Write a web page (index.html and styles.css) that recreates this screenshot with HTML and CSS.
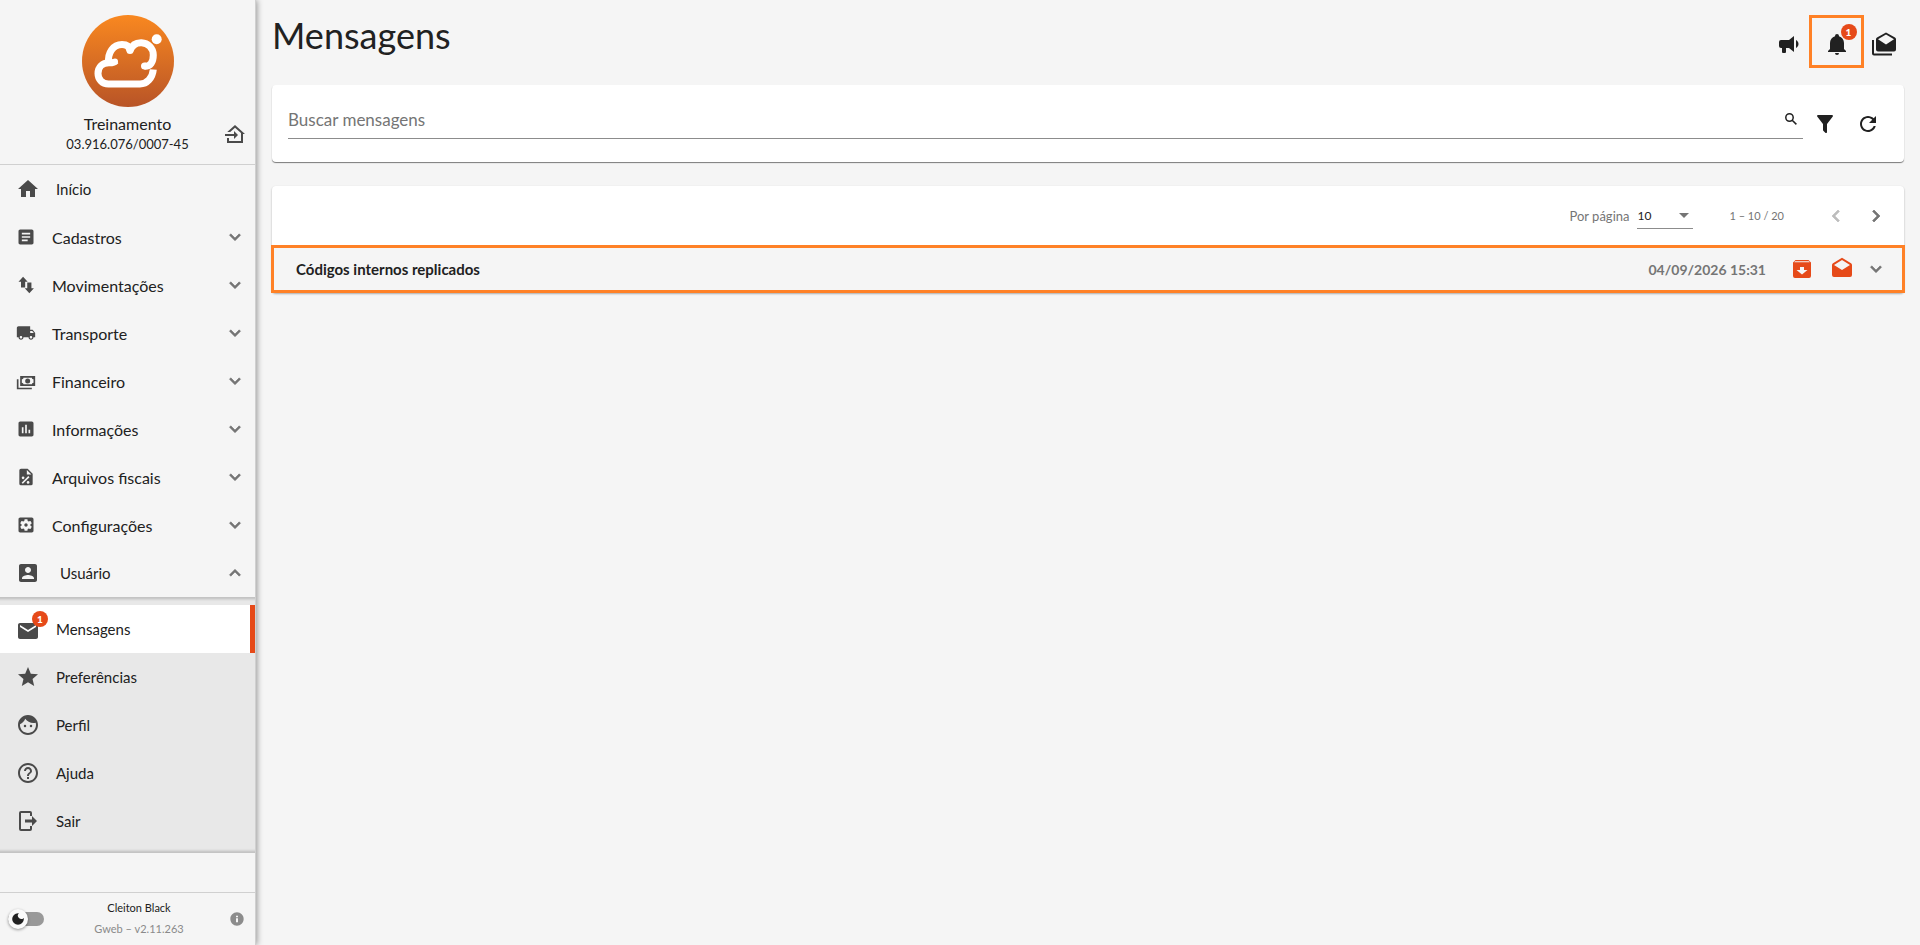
FILE: index.html
```html
<!DOCTYPE html>
<html lang="pt-BR">
<head>
    <meta charset="UTF-8">
    <meta name="viewport" content="width=device-width, initial-scale=1.0">
    <title>Mensagens</title>
    <link rel="stylesheet" href="styles.css">
</head>
<body>

    <!-- Ícones reutilizados -->
    <svg class="sprite" aria-hidden="true">
        <symbol id="chevron" viewBox="0 0 24 24"><path d="M16.59 8.59L12 13.17 7.41 8.59 6 10l6 6 6-6z"/></symbol>
    </svg>

    <div class="layout">
        <aside class="sidebar">
            <header class="company">
                <svg class="logo" viewBox="0 0 92 92" aria-hidden="true">
                    <defs>
                        <linearGradient id="logo-bg" x1="0" y1="0" x2="0" y2="1">
                            <stop offset="0" stop-color="#f98820"/>
                            <stop offset="1" stop-color="#b85427"/>
                        </linearGradient>
                    </defs>
                    <circle cx="46" cy="46" r="46" fill="url(#logo-bg)"/>
                    <path class="logo-line" d="M71.3 54.5C70.5 63 65 69 58 69H26.500C20 69 16 64 16 58.500C16 52 20.500 47.800 27 47.800C30 47.800 32.500 47.500 33.500 46"/>
                    <path class="logo-line" d="M26.700 47.500C25.500 38 31 29.500 40 29.500C45 29.500 47.500 32 48 35.700C50 30 54 27.500 59.500 27.700C66 28 71.300 33 71.300 40C71.300 47 68.500 51.500 62.500 51.300" />
                    <circle cx="48" cy="35.500" r="3.500" fill="#fff"/>
                    <circle cx="33" cy="46.500" r="3" fill="#fff"/>
                    <circle cx="62.500" cy="51" r="3.500" fill="#fff"/>
                    <circle cx="74.700" cy="24.300" r="5" fill="#fff"/>
                </svg>
                <div class="company-name">Treinamento</div>
                <div class="company-id">03.916.076/0007-45</div>
                <button class="icon-button switch-company" type="button" aria-label="Trocar empresa">
                    <svg class="icon" viewBox="0 0 24 24"><path d="M15 13L11 9V12H2V14H11V17M22 12H20V21H4V16H6V19H18V11L12 5.690L7.210 10H4.220L12 3Z"/></svg>
                </button>
            </header>

            <nav class="menu">
                <a class="menu-item wide" href="#">
                    <svg class="icon" viewBox="0 0 24 24"><path d="M10 20v-6h4v6h5v-8h3L12 3 2 12h3v8z"/></svg>
                    <span>Início</span>
                </a>
                <button class="menu-item" type="button">
                    <svg class="icon small" viewBox="0 0 24 24"><path d="M19 3H5c-1.100 0-2 .9-2 2v14c0 1.100.9 2 2 2h14c1.100 0 2-.9 2-2V5c0-1.100-.9-2-2-2zm-5 14H7v-2h7v2zm3-4H7v-2h10v2zm0-4H7V7h10v2z"/></svg>
                    <span>Cadastros</span>
                    <svg class="chevron"><use href="#chevron"/></svg>
                </button>
                <button class="menu-item" type="button">
                    <svg class="icon small" viewBox="0 0 24 24"><path d="M8.500 2L14 8h-3v7H6V8H3zM16 22l5.500-6H18.500V9h-5v7h-3z"/></svg>
                    <span>Movimentações</span>
                    <svg class="chevron"><use href="#chevron"/></svg>
                </button>
                <button class="menu-item" type="button">
                    <svg class="icon small" viewBox="0 0 24 24"><path d="M20 8h-3V4H3c-1.100 0-2 .9-2 2v11h2c0 1.660 1.340 3 3 3s3-1.340 3-3h6c0 1.660 1.340 3 3 3s3-1.340 3-3h2v-5l-3-4zM6 18.500c-.83 0-1.500-.67-1.500-1.500s.67-1.500 1.500-1.500 1.500.67 1.500 1.500-.67 1.500-1.500 1.500zm13.500-9l1.960 2.500H17V9.500h2.500zm-1.500 9c-.83 0-1.500-.67-1.500-1.500s.67-1.500 1.500-1.500 1.500.67 1.500 1.500-.67 1.500-1.500 1.500z"/></svg>
                    <span>Transporte</span>
                    <svg class="chevron"><use href="#chevron"/></svg>
                </button>
                <button class="menu-item" type="button">
                    <svg class="icon small" viewBox="0 0 24 24"><path fill-rule="evenodd" d="M5,6H23V18H5V6M14,9A3,3 0 0,1 17,12A3,3 0 0,1 14,15A3,3 0 0,1 11,12A3,3 0 0,1 14,9M9,8A2,2 0 0,1 7,10V14A2,2 0 0,1 9,16H19A2,2 0 0,1 21,14V10A2,2 0 0,1 19,8H9M1,10H3V20H19V22H1V10Z"/></svg>
                    <span>Financeiro</span>
                    <svg class="chevron"><use href="#chevron"/></svg>
                </button>
                <button class="menu-item" type="button">
                    <svg class="icon small" viewBox="0 0 24 24"><path d="M19 3H5c-1.100 0-2 .9-2 2v14c0 1.100.9 2 2 2h14c1.100 0 2-.9 2-2V5c0-1.100-.9-2-2-2zM9 17H7v-7h2v7zm4 0h-2V7h2v10zm4 0h-2v-4h2v4z"/></svg>
                    <span>Informações</span>
                    <svg class="chevron"><use href="#chevron"/></svg>
                </button>
                <button class="menu-item" type="button">
                    <svg class="icon small" viewBox="0 0 24 24">
                        <path fill-rule="evenodd" d="M14 2l6 6v12a2 2 0 0 1-2 2H6a2 2 0 0 1-2-2V4a2 2 0 0 1 2-2h8zM13 3.500V9h5.500z"/>
                        <path d="M7.500 19.500l8-8" stroke="#f5f5f5" stroke-width="2"/>
                        <circle cx="8.500" cy="13" r="1.600" fill="#f5f5f5"/>
                        <circle cx="14.500" cy="18.500" r="1.600" fill="#f5f5f5"/>
                    </svg>
                    <span>Arquivos fiscais</span>
                    <svg class="chevron"><use href="#chevron"/></svg>
                </button>
                <button class="menu-item" type="button">
                    <svg class="icon small" viewBox="0 0 24 24"><path d="M12 10c-1.100 0-2 .9-2 2s.9 2 2 2 2-.9 2-2-.9-2-2-2zm7-7H5c-1.110 0-2 .9-2 2v14c0 1.100.89 2 2 2h14c1.110 0 2-.9 2-2V5c0-1.100-.89-2-2-2zm-1.750 9c0 .23-.02.46-.05.68l1.480 1.160c.13.11.17.3.08.45l-1.400 2.420c-.09.15-.27.21-.43.15l-1.740-.7c-.36.28-.76.51-1.180.69l-.26 1.850c-.03.17-.18.3-.35.3h-2.800c-.17 0-.32-.13-.35-.29l-.26-1.850c-.43-.18-.82-.41-1.180-.69l-1.740.7c-.16.06-.34 0-.43-.15l-1.400-2.420c-.09-.15-.05-.34.08-.45l1.480-1.160c-.03-.23-.05-.46-.05-.69 0-.23.02-.46.05-.68l-1.480-1.160c-.13-.11-.17-.3-.08-.45l1.400-2.420c.09-.15.27-.21.43-.15l1.740.7c.36-.28.76-.51 1.180-.69l.26-1.850c.03-.17.18-.3.35-.3h2.800c.17 0 .32.13.35.29l.26 1.850c.43.18.82.41 1.180.69l1.740-.7c.16-.06.34 0 .43.15l1.400 2.420c.09.15.05.34-.08.45l-1.480 1.160c.03.23.05.46.05.69z"/></svg>
                    <span>Configurações</span>
                    <svg class="chevron"><use href="#chevron"/></svg>
                </button>
                <button class="menu-item user" type="button" aria-expanded="true">
                    <svg class="icon" viewBox="0 0 24 24"><path d="M3 5v14c0 1.100.89 2 2 2h14c1.100 0 2-.9 2-2V5c0-1.100-.9-2-2-2H5c-1.110 0-2 .9-2 2zm12 4c0 1.660-1.340 3-3 3s-3-1.340-3-3 1.340-3 3-3 3 1.340 3 3zm-9 8c0-2 4-3.100 6-3.100s6 1.100 6 3.100v1H6v-1z"/></svg>
                    <span>Usuário</span>
                    <svg class="chevron up"><use href="#chevron"/></svg>
                </button>

                <div class="submenu">
                    <a class="menu-item wide active" href="#" aria-current="page">
                        <span class="with-badge">
                            <svg class="icon" viewBox="0 0 24 24"><path d="M20 4H4c-1.100 0-1.990.9-1.990 2L2 18c0 1.100.9 2 2 2h16c1.100 0 2-.9 2-2V6c0-1.100-.9-2-2-2zm0 4l-8 5-8-5V6l8 5 8-5v2z"/></svg>
                            <span class="badge">1</span>
                        </span>
                        <span>Mensagens</span>
                    </a>
                    <a class="menu-item wide" href="#">
                        <svg class="icon" viewBox="0 0 24 24"><path d="M12 17.270L18.180 21l-1.640-7.030L22 9.240l-7.190-.61L12 2 9.190 8.630 2 9.240l5.460 4.730L5.820 21z"/></svg>
                        <span>Preferências</span>
                    </a>
                    <a class="menu-item wide" href="#">
                        <svg class="icon" viewBox="0 0 24 24"><circle cx="9" cy="13" r="1.250"/><circle cx="15" cy="13" r="1.250"/><path d="M12 2C6.480 2 2 6.480 2 12s4.480 10 10 10 10-4.480 10-10S17.520 2 12 2zm0 18c-4.410 0-8-3.590-8-8 0-.29.02-.58.05-.86 2.360-1.050 4.230-2.980 5.210-5.370C11.070 8.330 14.050 10 17.420 10c.78 0 1.530-.09 2.250-.26.21.71.33 1.470.33 2.260 0 4.410-3.590 8-8 8z"/></svg>
                        <span>Perfil</span>
                    </a>
                    <a class="menu-item wide" href="#">
                        <svg class="icon" viewBox="0 0 24 24"><path d="M11 18h2v-2h-2v2zm1-16C6.480 2 2 6.480 2 12s4.480 10 10 10 10-4.480 10-10S17.520 2 12 2zm0 18c-4.410 0-8-3.590-8-8s3.590-8 8-8 8 3.590 8 8-3.590 8-8 8zm0-14c-2.210 0-4 1.790-4 4h2c0-1.100.9-2 2-2s2 .9 2 2c0 2-3 1.750-3 5h2c0-2.250 3-2.500 3-5 0-2.210-1.790-4-4-4z"/></svg>
                        <span>Ajuda</span>
                    </a>
                    <a class="menu-item wide" href="#">
                        <svg class="icon" viewBox="0 0 24 24"><path d="M5 2h9a2 2 0 0 1 2 2v3h-2V4H5v16h9v-3h2v3a2 2 0 0 1-2 2H5a2 2 0 0 1-2-2V4a2 2 0 0 1 2-2z"/><path d="M9 10.500h7V7l5 5-5 5v-3.500H9z"/></svg>
                        <span>Sair</span>
                    </a>
                </div>
            </nav>

            <footer class="sidebar-footer">
                <label class="theme-toggle">
                    <input type="checkbox" aria-label="Tema escuro">
                    <span class="track"></span>
                    <span class="thumb">
                        <svg viewBox="0 0 24 24"><path d="M12 2a10 10 0 1 0 10 10c0-.7-.1-1.300-.2-1.900A5.600 5.600 0 1 1 13.500 2.100 10 10 0 0 0 12 2z"/></svg>
                    </span>
                </label>
                <div class="session">
                    <div>Cleiton Black</div>
                    <div class="version">Gweb – v2.11.263</div>
                </div>
                <button class="icon-button info" type="button" aria-label="Informações da versão">
                    <svg viewBox="0 0 24 24"><path d="M12 2C6.480 2 2 6.480 2 12s4.480 10 10 10 10-4.480 10-10S17.520 2 12 2zm1.500 15h-3v-6h3v6zm0-7.500h-3v-2.500h3v2.500z"/></svg>
                </button>
            </footer>
        </aside>

        <main class="content">
            <header class="page-header">
                <h1>Mensagens</h1>
                <div class="page-actions">
                    <button class="icon-button" type="button" aria-label="Comunicados">
                        <svg class="icon" viewBox="0 0 24 24"><path d="M12,8H4A2,2 0 0,0 2,10V14A2,2 0 0,0 4,16H5V20A1,1 0 0,0 6,21H8A1,1 0 0,0 9,20V16H12L17,20V4L12,8M21.500,12C21.500,13.710 20.540,15.260 19,16V8C20.530,8.750 21.500,10.300 21.500,12Z"/></svg>
                    </button>
                    <button class="icon-button notifications" type="button" aria-label="Notificações">
                        <span class="with-badge">
                            <svg class="icon" viewBox="0 0 24 24"><path d="M21,19V20H3V19L5,17V11C5,7.900 7.030,5.170 10,4.290V4A2,2 0 0,1 14,4V4.290C16.970,5.170 19,7.900 19,11V17L21,19M14,21A2,2 0 0,1 10,21"/></svg>
                            <span class="badge">1</span>
                        </span>
                    </button>
                    <button class="icon-button" type="button" aria-label="Marcar todas como lidas">
                        <svg class="icon" viewBox="0 0 24 24"><path fill-rule="evenodd" d="M14 .5L23 5.500C23.700 6 24 6.500 24 7.300V17.500a2 2 0 0 1-2 2H6a2 2 0 0 1-2-2V7.300C4 6.500 4.300 6 5 5.500zM14 2.600L6 7.300l8 5.200 8-5.200z"/><path d="M0 8h2v13.500h18v2H2a2 2 0 0 1-2-2z"/></svg>
                    </button>
                </div>
            </header>

            <form class="card search">
                <div class="search-field">
                    <input type="search" placeholder="Buscar mensagens" aria-label="Buscar mensagens">
                    <button class="icon-button" type="submit" aria-label="Buscar">
                        <svg class="search-icon" viewBox="0 0 12 12"><circle cx="4.500" cy="4.500" r="3.700"/><path d="M7.200 7.200L11.400 11.400"/></svg>
                    </button>
                </div>
                <button class="icon-button" type="button" aria-label="Filtrar">
                    <svg class="icon" viewBox="0 0 24 24"><path d="M14,12V19.880C14.040,20.180 13.940,20.500 13.710,20.710C13.320,21.100 12.690,21.100 12.300,20.710L10.290,18.700C10.060,18.470 9.960,18.160 10,17.870V12H9.970L4.210,4.620C3.870,4.190 3.950,3.560 4.380,3.220C4.570,3.080 4.780,3 5,3H19C19.220,3 19.430,3.080 19.620,3.220C20.050,3.560 20.130,4.190 19.790,4.620L14.030,12H14Z"/></svg>
                </button>
                <button class="icon-button reload" type="reset" aria-label="Atualizar">
                    <svg class="icon" viewBox="0 0 24 24"><path d="M17.650 6.350C16.200 4.900 14.210 4 12 4c-4.420 0-7.990 3.580-7.990 8s3.570 8 7.990 8c3.730 0 6.840-2.550 7.730-6h-2.080c-.82 2.330-3.040 4-5.650 4-3.310 0-6-2.690-6-6s2.690-6 6-6c1.660 0 3.140.69 4.220 1.780L13 11h7V4l-2.350 2.350z"/></svg>
                </button>
            </form>

            <section class="card messages">
                <div class="paginator">
                    <label for="page-size">Por página</label>
                    <div class="page-size">
                        <select id="page-size">
                            <option>10</option>
                            <option>20</option>
                            <option>50</option>
                        </select>
                        <svg class="caret" viewBox="0 0 10 5"><path d="M0 0h10L5 5z"/></svg>
                    </div>
                    <span class="range">1 – 10 / 20</span>
                    <button class="icon-button" type="button" aria-label="Página anterior" disabled>
                        <svg class="page-arrow prev"><use href="#chevron"/></svg>
                    </button>
                    <button class="icon-button" type="button" aria-label="Próxima página">
                        <svg class="page-arrow next"><use href="#chevron"/></svg>
                    </button>
                </div>

                <article class="message">
                    <h2>Códigos internos replicados</h2>
                    <time datetime="2026-09-04T15:31">04/09/2026 15:31</time>
                    <div class="message-actions">
                        <button class="icon-button" type="button" aria-label="Arquivar">
                            <svg class="icon" viewBox="0 0 24 24"><path fill-rule="evenodd" d="M5.500 3h13L21 5.500V19a2 2 0 0 1-2 2H5a2 2 0 0 1-2-2V5.500zM5 4.200L4.300 5.200h15.400L19 4.200zM12 17.500L17.500 13H14v-3h-4v3H6.500z"/></svg>
                        </button>
                        <button class="icon-button" type="button" aria-label="Marcar como lida">
                            <svg class="icon" viewBox="0 0 24 24"><path fill-rule="evenodd" d="M4,8L12,13L20,8L12,3L4,8M22,8V18A2,2 0 0,1 20,20H4A2,2 0 0,1 2,18V8C2,7.270 2.390,6.640 2.970,6.290L12,0.640L21.030,6.290C21.610,6.640 22,7.270 22,8Z"/></svg>
                        </button>
                    </div>
                    <button class="icon-button expand" type="button" aria-label="Expandir">
                        <svg class="chevron"><use href="#chevron"/></svg>
                    </button>
                </article>
            </section>
        </main>
    </div>

</body>
</html>
```

FILE: styles.css
```css
:root {
    --color-bg: #f5f5f5;
    --color-submenu: #e8e8e8;
    --color-text: #212121;
    --color-muted: #757575;
    --color-icon: #4a4a4a;
    --color-line: #d0d0d0;
    --color-accent: #e64a19;
    --color-highlight: #ff8126;
    --font-family: Lato, "Open Sans", sans-serif;
}

* {
    box-sizing: border-box;
}

body {
    margin: 0;
    font-family: var(--font-family);
    font-size: 16px;
    color: var(--color-text);
    background-color: var(--color-bg);
}

button,
input,
select {
    font: inherit;
    color: inherit;
}

svg {
    display: block;
    flex-shrink: 0;
    fill: currentColor;
}

.sprite {
    display: none;
}

.layout {
    display: flex;
    min-height: 100vh;
}

.icon {
    width: 24px;
    height: 24px;
}

.icon.small {
    width: 20px;
    height: 20px;
}

.chevron,
.page-arrow {
    stroke: currentColor;
    stroke-width: 0.7;
}

.chevron {
    width: 22px;
    height: 22px;
}

.icon-button {
    display: flex;
    align-items: center;
    justify-content: center;
    padding: 0;
    border: 0;
    background: none;
    cursor: pointer;
}

.with-badge {
    position: relative;
    margin-top: 4px;
}

.badge {
    position: absolute;
    top: -8px;
    right: -8px;
    width: 16px;
    height: 16px;
    border-radius: 50%;
    background-color: var(--color-accent);
    color: #fff;
    font-size: 10px;
    font-weight: 900;
    line-height: 16px;
    text-align: center;
}

/* --- Menu lateral --- */
.sidebar {
    display: flex;
    flex-direction: column;
    flex-shrink: 0;
    width: 256px;
    border-right: 1px solid var(--color-line);
    box-shadow: 1px 0 6px rgba(0, 0, 0, 0.4);
}

.company {
    position: relative;
    padding: 15px 0 11px;
    border-bottom: 1px solid var(--color-line);
    text-align: center;
}

.logo {
    width: 92px;
    height: 92px;
    margin: 0 auto 6px;
}

.logo-line {
    fill: none;
    stroke: #fff;
    stroke-width: 7;
}

.company-name {
    line-height: 22px;
}

.company-id {
    font-size: 13px;
    line-height: 18px;
}

.switch-company {
    position: absolute;
    right: 8px;
    bottom: 18px;
    color: var(--color-icon);
}

.menu-item {
    display: flex;
    align-items: center;
    gap: 16px;
    width: 100%;
    height: 48px;
    padding: 0 9px 0 16px;
    border: 0;
    background: none;
    text-align: left;
    text-decoration: none;
    color: inherit;
    cursor: pointer;
}

.menu-item.wide {
    font-size: 15px;
}

.menu-item.user {
    gap: 20px;
    font-size: 15px;
}

.menu-item .icon {
    color: var(--color-icon);
}

.menu-item .chevron {
    margin-left: auto;
    color: var(--color-muted);
}

.chevron.up {
    transform: rotate(180deg);
}

.submenu {
    padding: 7px 0;
    border-top: 1px solid #c4c4c4;
    border-bottom: 1px solid #c4c4c4;
    background-color: var(--color-submenu);
    box-shadow: inset 0 4px 3px -3px rgba(0, 0, 0, 0.2), inset 0 -4px 3px -3px rgba(0, 0, 0, 0.2);
}

.menu-item.active {
    border-right: 5px solid var(--color-accent);
    background-color: #fff;
}

.sidebar-footer {
    display: flex;
    align-items: center;
    justify-content: space-between;
    height: 53px;
    margin-top: auto;
    padding: 0 10px 0 8px;
    border-top: 1px solid var(--color-line);
    text-align: center;
}

.session {
    padding: 0 0 3px 5px;
    font-size: 11px;
    line-height: 21px;
}

.version {
    color: #8a8a8a;
}

.info {
    color: #8c8c8c;
}

.info svg {
    width: 16px;
    height: 16px;
}

.theme-toggle {
    position: relative;
    display: flex;
    align-items: center;
    width: 36px;
    height: 20px;
    cursor: pointer;
}

.theme-toggle input {
    position: absolute;
    inset: 0;
    margin: 0;
    opacity: 0;
}

.track {
    width: 36px;
    height: 14px;
    border-radius: 7px;
    background-color: #999;
}

.thumb {
    position: absolute;
    left: 0;
    display: grid;
    place-items: center;
    width: 20px;
    height: 20px;
    border-radius: 50%;
    background-color: #fafafa;
    box-shadow: 0 1px 3px rgba(0, 0, 0, 0.4);
}

.thumb svg {
    width: 14px;
    height: 14px;
}

/* --- Conteúdo --- */
.content {
    flex: 1;
    min-width: 0;
    padding: 0 16px;
}

.page-header {
    display: flex;
    justify-content: space-between;
    height: 85px;
    padding: 15px 8px 0 0;
}

h1 {
    margin: 0;
    font-size: 36px;
    font-weight: 400;
    line-height: 40px;
}

.page-actions {
    display: flex;
    align-items: flex-start;
    gap: 8px;
}

.page-actions .icon-button {
    height: 58px;
}

.page-actions .notifications {
    width: 55px;
    height: 53px;
    border: 3px solid var(--color-highlight);
}

.card {
    border-radius: 4px;
    background-color: #fff;
    box-shadow: 0 1px 2px rgba(0, 0, 0, 0.3);
}

.search {
    display: flex;
    align-items: center;
    gap: 10px;
    height: 77px;
    margin-bottom: 24px;
    padding: 0 24px 0 16px;
    box-shadow: 0 1px 1px rgba(0, 0, 0, 0.5);
}

.search-field {
    display: flex;
    flex: 1;
    align-items: center;
    height: 38px;
    margin-bottom: 8px;
    padding-right: 6px;
    border-bottom: 1px solid #8c8c8c;
}

.search-field input {
    flex: 1;
    min-width: 0;
    padding: 0;
    border: 0;
    outline: 0;
    background: none;
    font-size: 17px;
}

.search-field input::placeholder {
    color: var(--color-muted);
    opacity: 1;
}

.search-icon {
    width: 12px;
    height: 12px;
    fill: none;
    stroke: currentColor;
    stroke-width: 1.5;
}

.reload {
    margin-left: 9px;
}

.paginator {
    display: flex;
    align-items: center;
    justify-content: flex-end;
    height: 59px;
    padding: 0 16px;
    font-size: 13px;
    color: var(--color-muted);
}

.page-size {
    position: relative;
    width: 56px;
    margin: 0 36px 0 8px;
    border-bottom: 1px solid #8c8c8c;
}

.page-size select {
    width: 100%;
    height: 26px;
    padding: 0;
    border: 0;
    appearance: none;
    background: none;
    color: var(--color-text);
    font-size: 12px;
}

.caret {
    position: absolute;
    top: 11px;
    right: 4px;
    width: 10px;
    height: 5px;
    pointer-events: none;
}

.range {
    margin-right: 40px;
    font-size: 11px;
}

.page-arrow {
    width: 24px;
    height: 24px;
}

.paginator .icon-button + .icon-button {
    margin-left: 16px;
}

.paginator .icon-button:disabled {
    color: #bdbdbd;
}

.prev {
    transform: rotate(90deg);
}

.next {
    transform: rotate(-90deg);
}

.message {
    display: flex;
    align-items: center;
    height: 48px;
    margin: 0 -1px;
    padding: 0 15px 0 22px;
    border: 3px solid var(--color-highlight);
    background-color: var(--color-bg);
}

.message h2 {
    flex: 1;
    margin: 0;
    font-size: 15px;
    font-weight: 700;
}

.message time {
    font-size: 14px;
    font-weight: 700;
    color: var(--color-muted);
}

.message-actions {
    display: flex;
    gap: 16px;
    margin: 0 11px 0 24px;
    color: var(--color-accent);
}

.message-actions .icon-button {
    color: inherit;
}

.expand {
    color: var(--color-muted);
}
```
